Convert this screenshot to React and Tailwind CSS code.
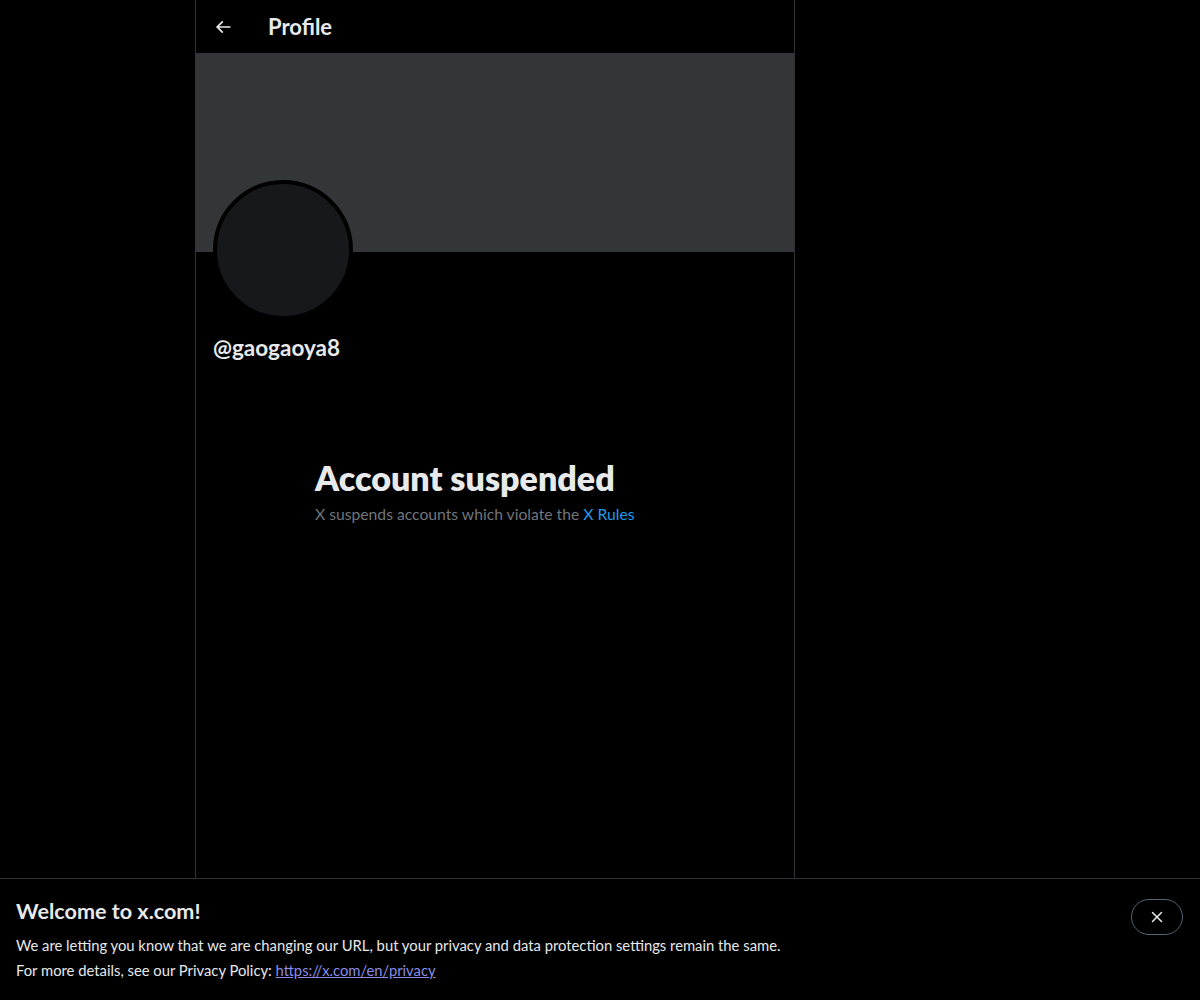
import { X } from "lucide-react"

export default function App() {
    return (
        <div className="min-h-screen bg-black text-[#e7e9ea]" style={{ fontFamily: '"Lato", "Liberation Sans", sans-serif' }}>
            <div className="w-[600px] ml-[195px] min-h-screen border-x border-[#2f3336]">
                {/* header */}
                <div className="h-[53px] flex items-center px-4">
                    <div className="w-[56px] flex items-center">
                        <svg viewBox="0 0 24 24" className="w-5 h-5 fill-[#e7e9ea] ml-[1px]">
                            <path d="M7.414 13l5.043 5.04-1.414 1.42L3.586 12l7.457-7.46 1.414 1.42L7.414 11H21v2H7.414z" />
                        </svg>
                    </div>
                    <h2 className="text-[22px] font-bold leading-6">Profile</h2>
                </div>

                {/* banner */}
                <div className="h-[199px] bg-[#333639]" />

                {/* avatar + name */}
                <div className="pl-[17px]">
                    <div className="w-[140px] h-[140px] -mt-[72px] rounded-full border-4 border-black bg-[#16181c]" />
                    <div className="mt-[16px] text-[22.5px] font-bold leading-6">@gaogaoya8</div>
                </div>

                {/* empty state */}
                <div className="w-[360px] mx-auto mt-[100px]">
                    <h2 className="text-[34px] font-extrabold leading-9 whitespace-nowrap">Account suspended</h2>
                    <p className="mt-[8px] text-[15.7px] leading-5 text-[#71767b] whitespace-nowrap">
                        X suspends accounts which violate the <span className="text-[#1d9bf0]">X Rules</span>
                    </p>
                </div>
            </div>

            {/* bottom notice */}
            <div className="fixed bottom-0 inset-x-0 h-[122px] bg-black border-t border-[#2f3336] px-4 pt-[18px] flex justify-between">
                <div>
                    <h2 className="text-[21.6px] font-bold leading-7">Welcome to x.com!</h2>
                    <p className="mt-[8px] text-[14.8px] leading-[25px]">
                        We are letting you know that we are changing our URL, but your privacy and data protection settings remain the same.
                    </p>
                    <p className="text-[14.8px] leading-[25px]">
                        For more details, see our Privacy Policy: <a href="#" className="underline text-[#8b8ce5]">https://x.com/en/privacy</a>
                    </p>
                </div>
                <button className="w-[52px] h-9 mt-[2px] mr-[1px] rounded-full border border-[#536471] flex items-center justify-center">
                    <X className="w-[18px] h-[18px] text-[#e7e9ea]" strokeWidth={2} />
                </button>
            </div>
        </div>
    )
}
